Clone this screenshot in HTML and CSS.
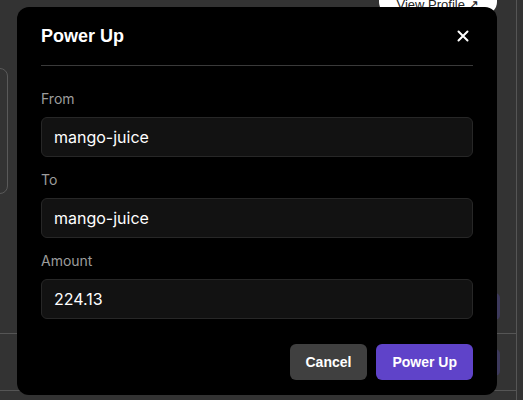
FILE: index.html
```html
<!DOCTYPE html>
<html>
<head>
    <title>Power Up</title>
    <link rel="stylesheet" href="styles.css">
</head>
<body>
    <div class="page">
        <div class="main">
            <div class="top-row">
                <button class="profile-btn">View Profile &#8599;</button>
            </div>
            <div class="side-card"></div>
            <div class="rows">
                <div class="row"><span class="row-btn"></span></div>
                <div class="row"><span class="row-btn"></span></div>
            </div>
        </div>
        <div class="rail"></div>
    </div>

    <div class="overlay">
        <div class="modal">
            <div class="modal-header">
                <h2>Power Up</h2>
                <button class="close-btn" aria-label="Close">
                    <svg width="12" height="12" viewBox="0 0 12 12">
                        <path d="M1.5 1.5 L10.5 10.5 M10.5 1.5 L1.5 10.5" stroke="#fff" stroke-width="2" stroke-linecap="round"/>
                    </svg>
                </button>
            </div>
            <div class="modal-body">
                <div class="field">
                    <label for="from">From</label>
                    <input type="text" id="from" value="mango-juice">
                </div>
                <div class="field">
                    <label for="to">To</label>
                    <input type="text" id="to" value="mango-juice">
                </div>
                <div class="field">
                    <label for="amount">Amount</label>
                    <input type="text" id="amount" value="224.13">
                </div>
            </div>
            <div class="modal-footer">
                <button class="btn btn-cancel">Cancel</button>
                <button class="btn btn-primary">Power Up</button>
            </div>
        </div>
    </div>
</body>
</html>
```

FILE: styles.css
```css
body {
    margin: 0;
    background-color: #333;
    font-family: Inter, "Liberation Sans", sans-serif;
    overflow: hidden;
}
.page {
    display: flex;
    height: 400px;
}
.main {
    width: 516px;
    display: flex;
    flex-direction: column;
}
.rail {
    flex: 1;
    border-left: 1px solid #555;
}
.top-row {
    display: flex;
    justify-content: flex-end;
    padding-right: 19px;
    height: 20px;
}
.profile-btn {
    margin-top: -16px;
    height: 30px;
    width: 118px;
    background-color: #fff;
    color: #222;
    border: none;
    border-radius: 12px;
    font-family: "Liberation Sans", Arial, sans-serif;
    font-size: 13px;
    padding-top: 12px;
    box-sizing: border-box;
}
.side-card {
    margin-top: 48px;
    margin-left: -40px;
    width: 46px;
    height: 124px;
    border: 1px solid #5a5a5a;
    border-radius: 8px;
}
.rows {
    margin-top: 99px;
}
.row {
    height: 56px;
    border-bottom: 1px solid #555;
    display: flex;
    justify-content: flex-end;
    align-items: center;
    padding-right: 16px;
}
.row:first-child {
    height: 40px;
    align-items: flex-start;
}
.row-btn {
    width: 60px;
    height: 27px;
    border-radius: 5px;
    background-color: #3d3a5c;
}

.overlay {
    position: fixed;
    top: 0;
    left: 0;
    width: 516px;
    height: 400px;
    display: flex;
    align-items: flex-start;
    padding: 7px 0 0 17px;
    box-sizing: border-box;
}
.modal {
    width: 480px;
    height: 388px;
    background-color: #000;
    border-radius: 12px;
    padding: 0 24px;
    box-sizing: border-box;
    display: flex;
    flex-direction: column;
}
.modal-header {
    height: 58px;
    display: flex;
    align-items: center;
    justify-content: space-between;
    border-bottom: 1px solid #3a3a3a;
}
.modal-header h2 {
    margin: 0;
    font-family: "Liberation Sans", Arial, sans-serif;
    font-size: 18px;
    font-weight: bold;
    color: #fff;
}
.close-btn {
    background: none;
    border: none;
    padding: 0;
    margin-right: 4px;
    display: flex;
    cursor: pointer;
}
.modal-body {
    padding-top: 23px;
    display: flex;
    flex-direction: column;
    gap: 13px;
}
.field {
    display: flex;
    flex-direction: column;
}
.field label {
    font-size: 14px;
    line-height: 20px;
    color: #9c9c9c;
    margin-bottom: 8px;
}
.field input {
    height: 40px;
    box-sizing: border-box;
    background-color: #121212;
    border: 1px solid #272727;
    border-radius: 6px;
    padding: 0 12px;
    font-family: Inter, sans-serif;
    font-size: 16px;
    color: #fff;
    outline: none;
}
.modal-footer {
    margin-top: 25px;
    display: flex;
    justify-content: flex-end;
    gap: 9px;
}
.btn {
    height: 36px;
    padding: 0 16px;
    border: none;
    border-radius: 6px;
    font-family: "Liberation Sans", Arial, sans-serif;
    font-size: 14px;
    font-weight: bold;
    color: #fff;
    cursor: pointer;
}
.btn-cancel {
    background-color: #404040;
}
.btn-primary {
    background-color: #5f43c9;
}
```
